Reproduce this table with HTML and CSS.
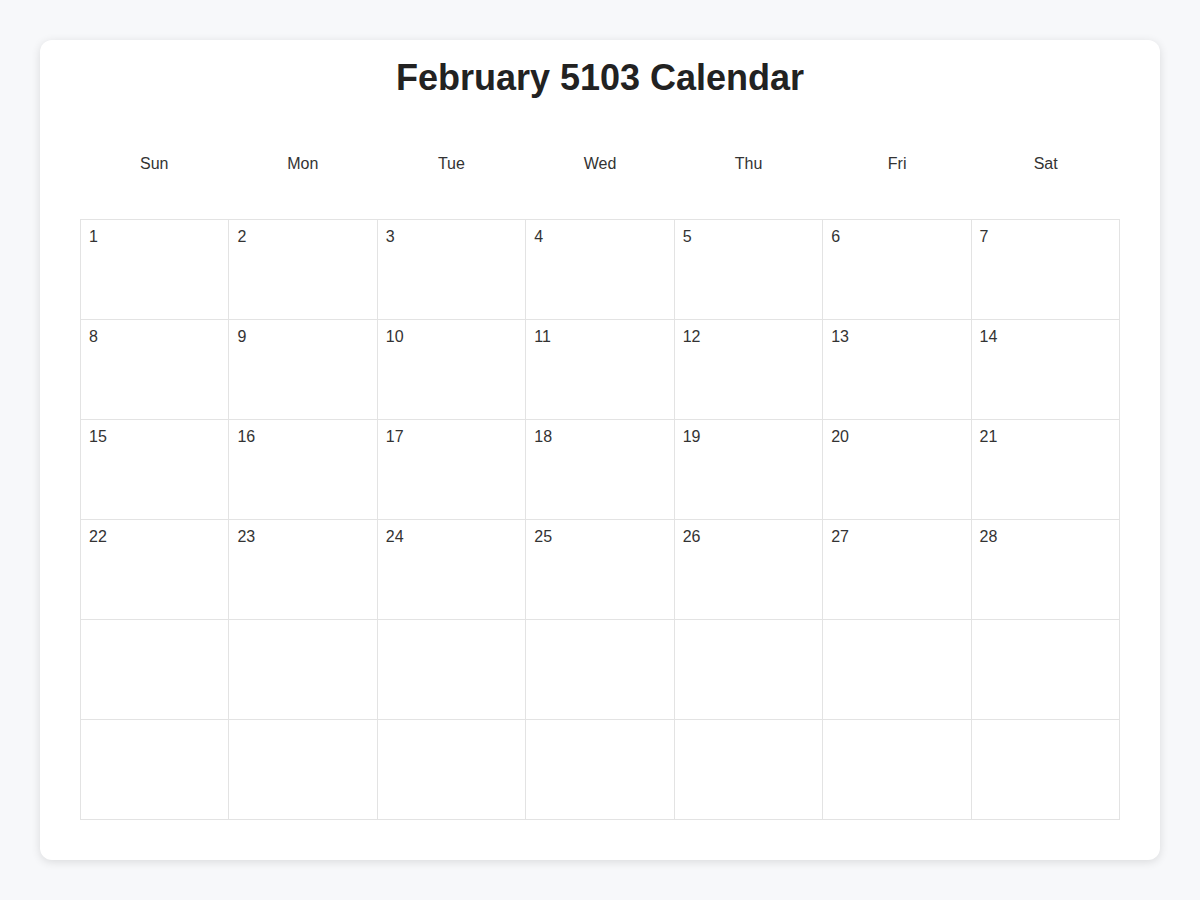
FILE: index.html
```html
<!DOCTYPE html>
<html lang="en">
<head>
<meta charset="utf-8">
<title>February 5103 Calendar</title>
<link rel="stylesheet" href="styles.css">
</head>
<body>
<div class="card">
  <h1 class="title">February 5103 Calendar</h1>
  <div class="weekdays">
    <div class="wd">Sun</div><div class="wd">Mon</div><div class="wd">Tue</div><div class="wd">Wed</div><div class="wd">Thu</div><div class="wd">Fri</div><div class="wd">Sat</div>
  </div>
  <div class="grid">
    <div class="cell">1</div><div class="cell">2</div><div class="cell">3</div><div class="cell">4</div><div class="cell">5</div><div class="cell">6</div><div class="cell">7</div>
    <div class="cell">8</div><div class="cell">9</div><div class="cell">10</div><div class="cell">11</div><div class="cell">12</div><div class="cell">13</div><div class="cell">14</div>
    <div class="cell">15</div><div class="cell">16</div><div class="cell">17</div><div class="cell">18</div><div class="cell">19</div><div class="cell">20</div><div class="cell">21</div>
    <div class="cell">22</div><div class="cell">23</div><div class="cell">24</div><div class="cell">25</div><div class="cell">26</div><div class="cell">27</div><div class="cell">28</div>
    <div class="cell"></div><div class="cell"></div><div class="cell"></div><div class="cell"></div><div class="cell"></div><div class="cell"></div><div class="cell"></div>
    <div class="cell"></div><div class="cell"></div><div class="cell"></div><div class="cell"></div><div class="cell"></div><div class="cell"></div><div class="cell"></div>
  </div>
</div>
</body>
</html>
```
FILE: styles.css
```css
html, body {
  margin: 0;
  padding: 0;
}
body {
  background: #f7f8fa;
  font-family: "Liberation Sans", Arial, sans-serif;
  color: #333;
  padding: 40px;
}
.card {
  background: #fff;
  border-radius: 12px;
  box-shadow: 0 2px 10px rgba(0, 0, 0, 0.12);
  padding: 17px 40px 40px;
}
.title {
  margin: 0;
  font-size: 36px;
  line-height: 41px;
  font-weight: bold;
  text-align: center;
  color: #222;
}
.weekdays {
  display: grid;
  grid-template-columns: repeat(7, 1fr);
  margin-top: 42px;
  margin-bottom: 31px;
}
.wd {
  text-align: center;
  font-size: 16px;
  line-height: 18px;
  padding: 15px 0;
  color: #333;
}
.grid {
  display: grid;
  grid-template-columns: repeat(7, 1fr);
  grid-auto-rows: 100px;
  border-top: 1px solid #e3e3e3;
  border-left: 1px solid #e3e3e3;
}
.cell {
  border-right: 1px solid #e3e3e3;
  border-bottom: 1px solid #e3e3e3;
  padding: 8px 8px 6px;
  font-size: 16px;
  line-height: 18px;
  color: #333;
}
```
